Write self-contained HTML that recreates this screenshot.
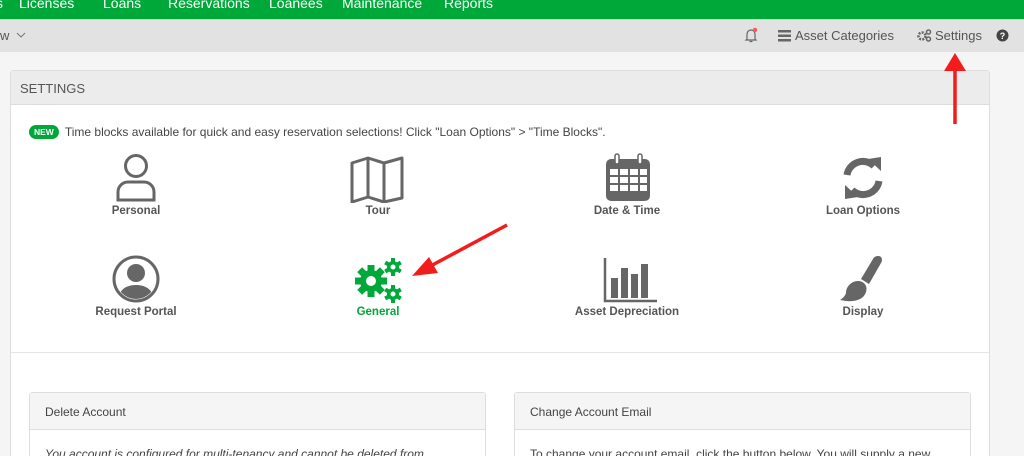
<!DOCTYPE html>
<html style="width:1024px;height:456px;overflow:hidden"><head><style>
*{margin:0;padding:0;box-sizing:border-box}
body{width:1024px;height:456px;overflow:hidden;background:#f5f5f5;font-family:"Liberation Sans",sans-serif;position:relative}
.top{position:absolute;left:0;top:0;width:1024px;height:19px;background:#00a83a;color:#fff;font-size:14px;overflow:hidden}
.top span{position:absolute;top:-5px}
.bar{position:absolute;left:0;top:19px;width:1024px;height:33px;background:#e2e2e2;border-top:1px solid #d0d0d0;color:#555;font-size:13px}
.panel{position:absolute;left:10px;top:70px;width:980px;height:400px;background:#fff;border:1px solid #ddd;border-bottom:none;border-radius:3px}
.ph{height:34px;background:#ececec;border-bottom:1px solid #ddd;color:#555;font-size:13px;padding:10px 9px}
.item{position:absolute;text-align:center;width:200px;font-size:11.5px;font-weight:bold;color:#555}
.sub{position:absolute;top:321px;width:457px;height:80px;border:1px solid #ddd;border-bottom:none;border-radius:3px;background:#fff}
.sub .h{height:37px;background:#f5f5f5;border-bottom:1px solid #ddd;font-size:12px;color:#444;padding:12px 15px}
.sub .b{padding:17px 15px;font-size:12px;color:#444;white-space:nowrap}
</style></head><body>
<div class="top"><span style="left:-4px">s</span><span style="left:19px">Licenses</span><span style="left:103px">Loans</span><span style="left:168px">Reservations</span><span style="left:269px">Loanees</span><span style="left:342px">Maintenance</span><span style="left:444px">Reports</span></div>
<div class="bar">
<span style="position:absolute;left:0;top:8px">w</span>
<svg style="position:absolute;left:16px;top:12px" width="10" height="7"><path d="M1 1l4 4 4-4" stroke="#777" fill="none"/></svg>
<svg style="position:absolute;left:744px;top:6px" width="14" height="18"><path d="M3 13V8a4 4 0 0 1 8 0v5l1 1H2z M5.5 15.5h3" stroke="#666" fill="none" stroke-width="1.2"/><circle cx="11" cy="4" r="2.2" fill="#f55"/></svg>
<svg style="position:absolute;left:778px;top:10px" width="13" height="12"><rect x="0" y="0" width="13" height="2.5" fill="#666"/><rect x="0" y="4.5" width="13" height="2.5" fill="#666"/><rect x="0" y="9" width="13" height="2.5" fill="#666"/></svg>
<span style="position:absolute;left:795px;top:8px">Asset Categories</span>
<svg style="position:absolute;left:917px;top:9px" width="15" height="13"><circle cx="5" cy="7" r="3.5" fill="none" stroke="#666" stroke-width="2.5" stroke-dasharray="2 1.2"/><circle cx="11.5" cy="3" r="2" fill="none" stroke="#666" stroke-width="1.5"/><circle cx="11.5" cy="10" r="2" fill="none" stroke="#666" stroke-width="1.5"/></svg>
<span style="position:absolute;left:935px;top:8px">Settings</span>
<svg style="position:absolute;left:996px;top:9px" width="13" height="13"><circle cx="6.5" cy="6.5" r="6" fill="#444"/><text x="6.5" y="10" fill="#fff" font-size="9" font-weight="bold" text-anchor="middle" font-family="Liberation Sans">?</text></svg>
</div>
<div class="panel">
<div class="ph">SETTINGS</div>
<div style="position:absolute;left:18px;top:54px;font-size:12px;color:#444"><span style="display:inline-block;background:#00a83a;color:#fff;font-size:8.5px;font-weight:bold;border-radius:7px;padding:2px 5px;margin-right:6px;vertical-align:1px">NEW</span>Time blocks available for quick and easy reservation selections! Click "Loan Options" &gt; "Time Blocks".</div>
<div class="item" style="left:25px;top:82px"><svg width="46" height="50"><circle cx="23" cy="13" r="10.5" fill="none" stroke="#666" stroke-width="3"/><path d="M5 47v-8a10 10 0 0 1 10-10h16a10 10 0 0 1 10 10v8z" fill="none" stroke="#666" stroke-width="3"/></svg><div style="margin-top:-1px">Personal</div></div>
<div class="item" style="left:267px;top:82px"><svg width="60" height="50"><path d="M4 10l16-5 16 5 18-5v40l-18 4-16-5-16 5z M20 5v40 M36 10v39" fill="none" stroke="#666" stroke-width="3" stroke-linejoin="round"/></svg><div style="margin-top:-1px">Tour</div></div>
<div class="item" style="left:516px;top:82px"><svg width="50" height="50"><rect x="4" y="6" width="44" height="42" rx="5" fill="#666"/><rect x="13" y="1" width="4" height="10" rx="2" fill="#fff" stroke="#666" stroke-width="1.5"/><rect x="36" y="1" width="4" height="10" rx="2" fill="#fff" stroke="#666" stroke-width="1.5"/><g fill="#fff"><rect x="8" y="16" width="8" height="6"/><rect x="18" y="16" width="8" height="6"/><rect x="28" y="16" width="8" height="6"/><rect x="38" y="16" width="7" height="6"/><rect x="8" y="24" width="8" height="6"/><rect x="18" y="24" width="8" height="6"/><rect x="28" y="24" width="8" height="6"/><rect x="38" y="24" width="7" height="6"/><rect x="8" y="32" width="8" height="6"/><rect x="18" y="32" width="8" height="6"/><rect x="28" y="32" width="8" height="6"/><rect x="38" y="32" width="7" height="6"/></g></svg><div style="margin-top:-1px">Date &amp; Time</div></div>
<div class="item" style="left:752px;top:82px"><svg width="50" height="50"><path d="M9 22a16 16 0 0 1 27-9" fill="none" stroke="#666" stroke-width="7"/><path d="M30 6l13-2v14z" fill="#666"/><path d="M41 28a16 16 0 0 1-27 9" fill="none" stroke="#666" stroke-width="7"/><path d="M20 44l-13 2v-14z" fill="#666"/></svg><div style="margin-top:-1px">Loan Options</div></div>
<div class="item" style="left:25px;top:183px"><svg width="50" height="50"><circle cx="25" cy="25" r="22" fill="none" stroke="#666" stroke-width="3"/><clipPath id="c"><circle cx="25" cy="25" r="20"/></clipPath><g clip-path="url(#c)" fill="#666"><circle cx="25" cy="19" r="9"/><path d="M7 48c0-12 8-17 18-17s18 5 18 17z"/></g></svg><div style="margin-top:-1px">Request Portal</div></div>
<div class="item" style="left:267px;top:183px;color:#00a83a"><svg width="56" height="50" fill="#00a83a"><g transform="translate(21,27)"><circle r="11"/><g><rect x="-3.5" y="-16" width="7" height="32"/><rect x="-3.5" y="-16" width="7" height="32" transform="rotate(45)"/><rect x="-3.5" y="-16" width="7" height="32" transform="rotate(90)"/><rect x="-3.5" y="-16" width="7" height="32" transform="rotate(135)"/></g><circle r="5" fill="#fff"/></g><g transform="translate(43,13)"><circle r="6"/><rect x="-2" y="-9" width="4" height="18"/><rect x="-2" y="-9" width="4" height="18" transform="rotate(60)"/><rect x="-2" y="-9" width="4" height="18" transform="rotate(120)"/><circle r="2.5" fill="#fff"/></g><g transform="translate(43,40)"><circle r="6"/><rect x="-2" y="-9" width="4" height="18"/><rect x="-2" y="-9" width="4" height="18" transform="rotate(60)"/><rect x="-2" y="-9" width="4" height="18" transform="rotate(120)"/><circle r="2.5" fill="#fff"/></g></svg><div style="margin-top:-1px">General</div></div>
<div class="item" style="left:516px;top:183px"><svg width="60" height="50"><path d="M8 4v43h57" fill="none" stroke="#666" stroke-width="2.5"/><g fill="#666"><rect x="14" y="24" width="7" height="20"/><rect x="24" y="14" width="7" height="30"/><rect x="34" y="20" width="7" height="24"/><rect x="44" y="10" width="7" height="34"/></g></svg><div style="margin-top:-1px">Asset Depreciation</div></div>
<div class="item" style="left:752px;top:183px"><svg width="50" height="50"><path d="M40 2c4 0 5 4 3 7L31 30l-8-5L35 5c1-2 3-3 5-3z" fill="#666"/><path d="M20 27c6 0 10 5 8 11-2 7-10 10-20 9l-6-1c3-2 5-4 6-7 0-6 5-12 12-12z" fill="#666"/></svg><div style="margin-top:-1px">Display</div></div>
<div style="position:absolute;left:0;top:281px;width:978px;border-top:1px solid #e6e6e6"></div>
<div class="sub" style="left:18px"><div class="h">Delete Account</div><div class="b" style="font-style:italic">You account is configured for multi-tenancy and cannot be deleted from</div></div>
<div class="sub" style="left:503px"><div class="h">Change Account Email</div><div class="b">To change your account email, click the button below. You will supply a new</div></div>
</div>
<svg style="position:absolute;left:0;top:0" width="1024" height="456"><g stroke="#f21c1c" stroke-width="3.5" fill="#f21c1c"><line x1="955" y1="124" x2="955" y2="66"/><path d="M944 71l11-18 11 18z" stroke="none"/><line x1="507" y1="225" x2="425" y2="269"/><path d="M412 276l26-3-9-16z" stroke="none"/></g></svg>
</body></html>
